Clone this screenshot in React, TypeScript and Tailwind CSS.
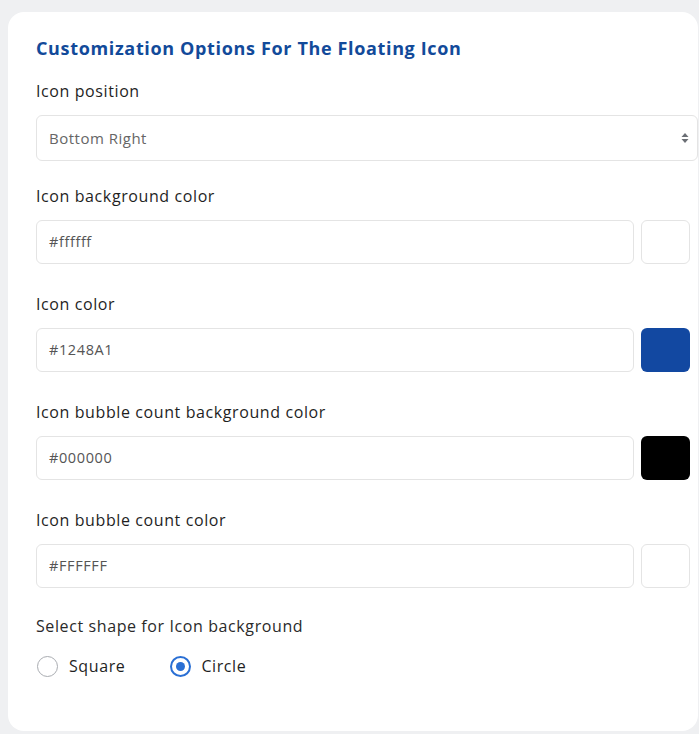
import React from "react";

const font = { fontFamily: '"Open Sans", "Noto Sans", Arial, sans-serif' };

function ColorRow({ label, value, swatch, border }: { label: string; value: string; swatch: string; border: boolean }) {
  return (
    <div className="flex flex-col">
      <div className="h-[20px] flex items-center text-[16px] font-medium text-[#1f1f1f] tracking-[0.6px]">{label}</div>
      <div className="mt-[14px] flex gap-[7px] items-center">
        <div className="w-[598px] h-[44px] border border-[#e4e4e4] rounded-[6px] flex items-center pl-[12px] text-[14.5px] tracking-[0.6px] text-[#555]">
          {value}
        </div>
        <div
          className={"w-[49px] h-[44px] rounded-[6px] " + (border ? "border border-[#e4e4e4]" : "")}
          style={{ backgroundColor: swatch }}
        />
      </div>
    </div>
  );
}

export default function App() {
  return (
    <div className="w-[699px] h-[734px] bg-[#eff0f2] pt-[12px] pl-[8px] overflow-hidden" style={font}>
      <div className="w-[690px] h-[719px] bg-white rounded-[16px] pl-[28px] pt-[24px] flex flex-col">
        <div className="text-[18px] font-bold text-[#124a9a] h-[24px] flex items-center tracking-[0.65px]">
          Customization Options For The Floating Icon
        </div>
        <div className="mt-[21px] h-[20px] flex items-center text-[16px] font-medium text-[#1f1f1f] tracking-[0.6px]">Icon position</div>
        <div className="mt-[14px] w-[662px] h-[46px] border border-[#e4e4e4] rounded-[6px] flex items-center justify-between pl-[12px] pr-[8px]">
          <span className="text-[15px] tracking-[0.5px] text-[#666]">Bottom Right</span>
          <svg width="8" height="12" viewBox="0 0 8 12">
            <path d="M4 1 L7.5 5 L0.5 5 Z" fill="#6b6f75" />
            <path d="M4 11 L7.5 7 L0.5 7 Z" fill="#6b6f75" />
          </svg>
        </div>
        <div className="mt-[25px] flex flex-col gap-[30px]">
          <ColorRow label="Icon background color" value="#ffffff" swatch="#ffffff" border />
          <ColorRow label="Icon color" value="#1248A1" swatch="#1248A1" border={false} />
          <ColorRow label="Icon bubble count background color" value="#000000" swatch="#000000" border={false} />
          <ColorRow label="Icon bubble count color" value="#FFFFFF" swatch="#ffffff" border />
        </div>
        <div className="mt-[28px] h-[20px] flex items-center text-[16px] tracking-[0.6px] text-[#2a2a2a]">Select shape for Icon background</div>
        <div className="mt-[18px] flex items-center pl-[1px]">
          <div className="flex items-center gap-[11px]">
            <div className="w-[21px] h-[21px] rounded-full border-[1.5px] border-[#a9acb1]" />
            <span className="text-[16px] font-medium text-[#1f1f1f] tracking-[0.6px]">Square</span>
          </div>
          <div className="flex items-center gap-[10px] ml-[45px]">
            <div className="w-[21px] h-[21px] rounded-full border-2 border-[#2a6fd4] flex items-center justify-center">
              <div className="w-[9px] h-[9px] rounded-full bg-[#2a6fd4]" />
            </div>
            <span className="text-[16px] font-medium text-[#1f1f1f] tracking-[0.6px]">Circle</span>
          </div>
        </div>
      </div>
    </div>
  );
}
